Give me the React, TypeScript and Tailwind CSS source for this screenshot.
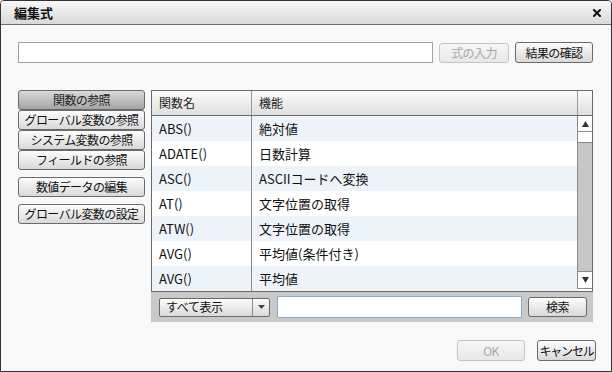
import React from "react";

const font = { fontFamily: "'Noto Sans CJK JP', 'Noto Sans', sans-serif" };

const rows: [string, string][] = [
  ["ABS()", "絶対値"],
  ["ADATE()", "日数計算"],
  ["ASC()", "ASCIIコードへ変換"],
  ["AT()", "文字位置の取得"],
  ["ATW()", "文字位置の取得"],
  ["AVG()", "平均値(条件付き)"],
  ["AVG()", "平均値"],
];

function Btn({ children, className = "", disabled = false, active = false }: { children: React.ReactNode; className?: string; disabled?: boolean; active?: boolean }) {
  const base = "flex items-center justify-center whitespace-nowrap rounded-[3px] border text-[12px] leading-none tracking-[-0.6px]";
  const look = disabled
    ? "border-[#c4c4c4] bg-gradient-to-b from-[#f6f6f6] to-[#e8e8e8] text-[#a8a8a8]"
    : active
    ? "border-[#6a6a6a] bg-gradient-to-b from-[#dadada] to-[#a4a4a4] text-[#222]"
    : "border-[#6a6a6a] bg-gradient-to-b from-[#fcfcfc] to-[#d9d9d9] text-[#111]";
  return <div className={`${base} ${look} ${className}`}>{children}</div>;
}

export default function App() {
  return (
    <div style={font} className="w-[612px] h-[372px] overflow-hidden">
      <div className="w-[612px] h-[372px] border border-[#333] rounded-t-[4px] bg-[#f7f8f7] flex flex-col overflow-hidden">
        {/* title bar */}
        <div className="h-[24px] shrink-0 flex items-center justify-between pl-[13px] pr-[10px] bg-gradient-to-b from-[#f7f7f7] to-[#d9d9d9] border-b border-[#6d6d6d]">
          <span className="text-[13px] font-bold text-[#111] leading-none">編集式</span>
          <svg width="8" height="8" viewBox="0 0 8 8" className="mt-[1px]">
            <path d="M1 1 L7 7 M7 1 L1 7" stroke="#111" strokeWidth="2" strokeLinecap="square" />
          </svg>
        </div>

        {/* body */}
        <div className="flex flex-col pl-[17px] pt-[17px]">
          <div className="flex items-center gap-[6px]">
            <div className="w-[415px] h-[21px] border border-[#a2a2a2] bg-white" />
            <Btn disabled className="w-[70px] h-[20px]">式の入力</Btn>
            <Btn className="w-[78px] h-[21px]">結果の確認</Btn>
          </div>

          <div className="flex mt-[27px] gap-[6px]">
            {/* left buttons */}
            <div className="w-[127px] flex flex-col">
              <Btn active className="h-[20px]">関数の参照</Btn>
              <Btn className="h-[20px]">グローバル変数の参照</Btn>
              <Btn className="h-[20px]">システム変数の参照</Btn>
              <Btn className="h-[20px]">フィールドの参照</Btn>
              <Btn className="h-[20px] mt-[7px]">数値データの編集</Btn>
              <Btn className="h-[20px] mt-[7px]">グローバル変数の設定</Btn>
            </div>

            {/* table panel */}
            <div className="w-[442px] flex flex-col">
              <div className="border border-[#6a6a6a] flex flex-col bg-white">
                {/* header */}
                <div className="h-[25px] flex border-b border-[#6a6a6a] bg-gradient-to-b from-[#fbfbfb] to-[#dfdfdf] text-[12px] text-[#222]">
                  <div className="w-[100px] border-r border-[#9a9a9a] flex items-center pl-[7px]">関数名</div>
                  <div className="flex-1 flex items-center pl-[7px] border-r border-[#9a9a9a]">機能</div>
                  <div className="w-[14px]" />
                </div>
                <div className="flex">
                  <div className="flex-1 flex flex-col">
                    {rows.map(([n, d], i) => (
                      <div key={i} className={`h-[25px] flex text-[13px] text-[#111] ${i % 2 === 0 ? "bg-[#eef3fa]" : "bg-white"}`}>
                        <div className="w-[100px] border-r border-[#8a8a8a] flex items-center pl-[7px]">{n}</div>
                        <div className="flex-1 flex items-center pl-[7px]">{d}</div>
                      </div>
                    ))}
                  </div>
                  {/* scrollbar */}
                  <div className="w-[15px] flex flex-col border-l border-[#8a8a8a] bg-[#c6c6c6] h-[173px] border-b border-[#8a8a8a]">
                    <div className="h-[16px] bg-white border-b border-[#8a8a8a] flex items-center justify-center">
                      <svg width="7" height="6" viewBox="0 0 7 6"><path d="M3.5 0 L7 6 L0 6 Z" fill="#333" /></svg>
                    </div>
                    <div className="h-[11px] bg-white border-b border-[#8a8a8a]" />
                    <div className="flex-1" />
                    <div className="h-[17px] bg-white border-t border-[#8a8a8a] flex items-center justify-center">
                      <svg width="7" height="6" viewBox="0 0 7 6"><path d="M0 0 L7 0 L3.5 6 Z" fill="#333" /></svg>
                    </div>
                  </div>
                </div>
              </div>
              {/* bottom bar */}
              <div className="h-[30px] bg-[#c9c9c9] flex items-center pl-[8px]">
                <div className="w-[111px] h-[19px] flex rounded-[2px] border border-[#6a6a6a] bg-gradient-to-b from-[#fcfcfc] to-[#dadada] text-[12px] text-[#111]">
                  <div className="flex-1 flex items-center pl-[6px] border-r border-[#8a8a8a] tracking-[-0.4px]">すべて表示</div>
                  <div className="w-[16px] flex items-center justify-center">
                    <svg width="7" height="4" viewBox="0 0 7 4"><path d="M0 0 L7 0 L3.5 4 Z" fill="#444" /></svg>
                  </div>
                </div>
                <div className="ml-[7px] w-[245px] h-[22px] border border-[#7fa9d6] bg-white rounded-[1px]" />
                <Btn className="ml-[6px] w-[59px] h-[20px]">検索</Btn>
              </div>
            </div>
          </div>
        </div>

        {/* footer */}
        <div className="flex-1" />
        <div className="flex justify-end gap-[12px] pr-[15px] pb-[10px]">
          <Btn disabled className="w-[68px] h-[21px]">OK</Btn>
          <Btn className="w-[59px] h-[21px] tracking-[-1.2px]">キャンセル</Btn>
        </div>
      </div>
    </div>
  );
}
